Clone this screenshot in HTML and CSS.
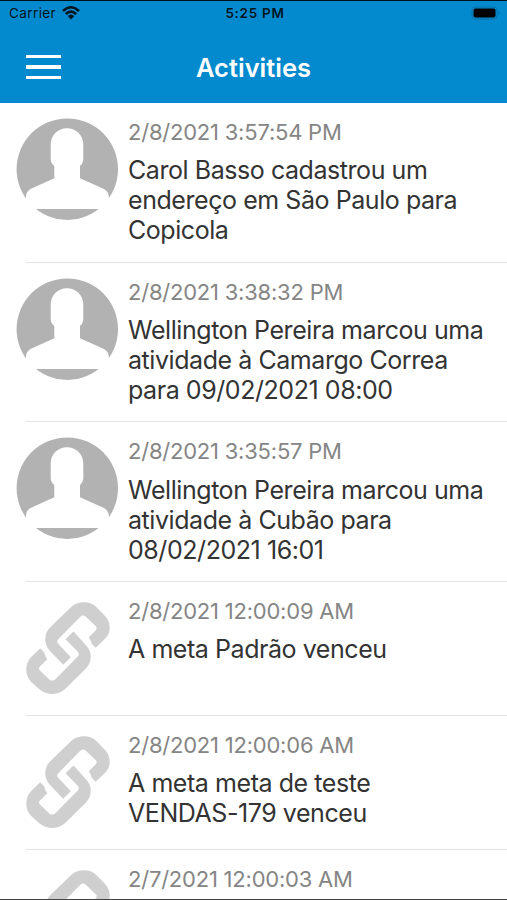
FILE: index.html
```
<!DOCTYPE html>
<html lang="en">
<head>
  <meta charset="UTF-8">
  <meta name="viewport" content="width=device-width, initial-scale=1.0">
  <title>Activities</title>
  <link rel="stylesheet" href="styles.css">
</head>
<body>
  <svg class="sprite" aria-hidden="true">
    <symbol id="person" viewBox="0 0 102 102">
      <circle cx="51.3" cy="51.2" r="50.7" fill="#b2b2b2"/>
      <path d="M34.7 27C34.7 17 42 10.3 51 10.3S67.3 17 67.3 27V41Q67.3 45 64 48V60.3L88 71Q93 74 93 80L92 91H10V80Q9.5 74 14.5 71L38.3 60.3V48Q34.7 45 34.7 41Z" fill="#fff"/>
    </symbol>
    <symbol id="link" viewBox="77 35 251 277">
      <path d="M286 173L314 146Q328 132 328 112Q328 92 314 77L290 52Q274 36 250 36Q228 36 212 50L149 111Q134 126 134 148Q134 166 147 181L188 224L211 201L173 161Q167 154 173 147L239 80Q248 71 257 80L287 109Q291 114 287 119L265 141Q272 150 274 161Z"/>
      <path d="M119 174L91 201Q77 216 77 238Q77 260 91 275L115 297Q133 312 157 312Q177 312 193 298L256 236Q271 220 271 200Q271 182 258 167L219 124L195 147L232 185Q238 192 232 199L166 266Q156 276 146 268L118 241Q112 235 118 229L140 207Q133 198 131 187Z"/>
    </symbol>
  </svg>

  <div class="screen">
    <header class="header">
      <div class="status-bar">
        <div class="carrier">
          <span>Carrier</span>
          <svg class="wifi" viewBox="0 0 18 14">
            <path d="M1 5Q9 -2.5 17 5M3.8 8Q9 3.2 14.2 8" fill="none" stroke="#001522" stroke-width="2.5"/>
            <path d="M5.7 10Q9 7 12.3 10L9 13.5Z" fill="#001522"/>
          </svg>
        </div>
        <span class="time">5:25 PM</span>
        <svg class="battery" viewBox="0 0 30 14">
          <rect x="1" y="1" width="25" height="12" rx="3.5" fill="none" stroke="#0570a8"/>
          <rect x="2.5" y="2.5" width="22" height="9" rx="2" fill="#000"/>
          <path d="M27.5 5Q30 7 27.5 9Z" fill="#0570a8"/>
        </svg>
      </div>
      <div class="nav-bar">
        <button class="menu" aria-label="Menu"><span></span><span></span><span></span></button>
        <h1>Activities</h1>
      </div>
    </header>

    <main class="list">
      <article class="row">
        <svg class="avatar"><use href="#person"/></svg>
        <div class="info">
          <time>2/8/2021 3:57:54 PM</time>
          <p>Carol Basso cadastrou um<br>endereço em São Paulo para<br>Copicola</p>
        </div>
      </article>
      <article class="row">
        <svg class="avatar"><use href="#person"/></svg>
        <div class="info">
          <time>2/8/2021 3:38:32 PM</time>
          <p>Wellington Pereira marcou uma<br>atividade à Camargo Correa<br>para 09/02/2021 08:00</p>
        </div>
      </article>
      <article class="row">
        <svg class="avatar"><use href="#person"/></svg>
        <div class="info">
          <time>2/8/2021 3:35:57 PM</time>
          <p>Wellington Pereira marcou uma<br>atividade à Cubão para<br>08/02/2021 16:01</p>
        </div>
      </article>
      <article class="row short">
        <svg class="link-icon"><use href="#link"/></svg>
        <div class="info">
          <time>2/8/2021 12:00:09 AM</time>
          <p>A meta Padrão venceu</p>
        </div>
      </article>
      <article class="row short">
        <svg class="link-icon"><use href="#link"/></svg>
        <div class="info">
          <time>2/8/2021 12:00:06 AM</time>
          <p>A meta meta de teste<br>VENDAS-179 venceu</p>
        </div>
      </article>
      <article class="row short">
        <svg class="link-icon"><use href="#link"/></svg>
        <div class="info">
          <time>2/7/2021 12:00:03 AM</time>
        </div>
      </article>
    </main>
  </div>
</body>
</html>
```
FILE: styles.css
```
* {
  box-sizing: border-box;
}

body {
  margin: 0;
  font-family: Inter, "Liberation Sans", sans-serif;
  background-color: #fff;
}

.sprite {
  display: none;
}

.screen {
  height: 900px;
  display: flex;
  flex-direction: column;
  overflow: hidden;
  border-top: 1px solid #000f1c;
  border-bottom: 1px solid #444;
}

.header {
  flex: none;
  height: 102px;
  background-color: #038ace;
}

.status-bar {
  display: grid;
  grid-template-columns: 1fr auto 1fr;
  align-items: center;
  height: 24px;
  padding: 0 6px 0 9px;
  color: #001522;
  font-size: 13.5px;
}

.carrier {
  display: flex;
  align-items: center;
  gap: 6px;
  letter-spacing: 0.4px;
}

.wifi {
  width: 18px;
  height: 14px;
}

.time {
  font-size: 13.5px;
  font-weight: 600;
  letter-spacing: 0.7px;
}

.battery {
  width: 30px;
  height: 14px;
  justify-self: end;
}

.nav-bar {
  display: grid;
  grid-template-columns: 1fr auto 1fr;
  align-items: center;
  height: 84px;
  padding: 0 26px;
}

.menu {
  display: flex;
  flex-direction: column;
  gap: 7px;
  width: 35px;
  padding: 0;
  border: none;
  background: none;
}

.menu span {
  width: 35px;
  height: 3.5px;
  background-color: #fff;
}

h1 {
  margin: 0;
  color: #fff;
  font-size: 25.5px;
  font-weight: 600;
}

.list {
  flex: 1;
  min-height: 0;
  overflow: hidden;
}

.row {
  display: flex;
  position: relative;
  height: 159.7px;
  padding: 15px 0 0 16px;
}

.row.short {
  height: 134px;
}

/* divider starts after the left inset */
.row::after {
  content: "";
  position: absolute;
  left: 26px;
  right: 0;
  bottom: 0;
  height: 1px;
  background-color: #e4e4e4;
}

.avatar {
  flex: none;
  width: 102px;
  height: 102px;
  margin-right: 10px;
}

.link-icon {
  flex: none;
  width: 84px;
  height: 92px;
  margin: 5px 18px 0 10px;
  fill: #cfcfcf;
}

.info {
  white-space: nowrap;
}

time {
  display: block;
  color: #858585;
  font-size: 22px;
  line-height: 28px;
  letter-spacing: -0.22px;
}

p {
  margin: 9.4px 0 0;
  color: #333;
  font-size: 25px;
  line-height: 30px;
  letter-spacing: -0.44px;
}
```
